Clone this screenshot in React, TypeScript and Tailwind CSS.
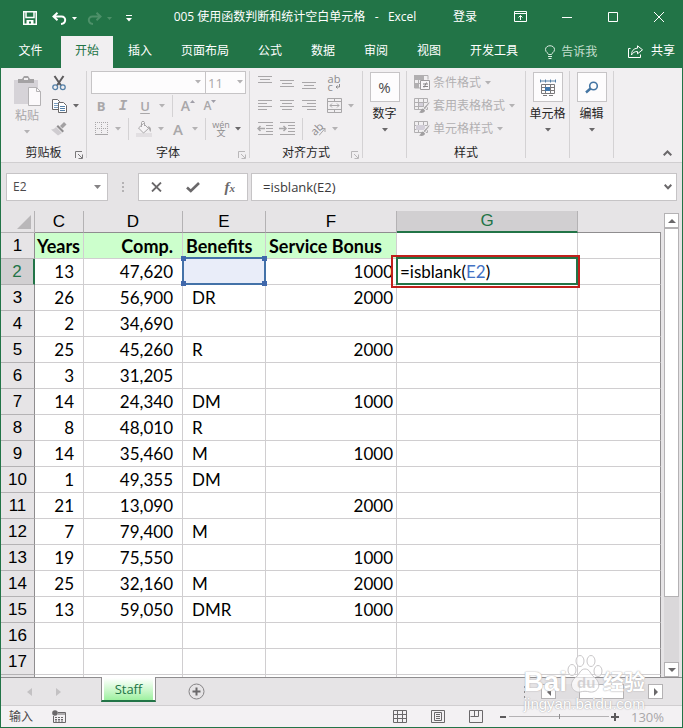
import React, { ReactNode } from "react";

const UI = "font-['Open_Sans','Noto_Sans_CJK_SC',sans-serif]";

function Caret({ dark = false }: { dark?: boolean }) {
  return (
    <svg width="6" height="4" viewBox="0 0 6 4" className={dark ? "text-[#6a686a]" : "text-[#b4b2b4]"} aria-hidden="true">
      <path d="M0 0h6L3 3.5z" fill="currentColor" />
    </svg>
  );
}

function Tool({ label, children }: { label: string; children: ReactNode }) {
  return (
    <button aria-label={label} className="flex h-[23px] w-[22px] shrink-0 items-center justify-center text-[#a9a7a9]">
      {children}
    </button>
  );
}

function Drop({ label, dark }: { label: string; dark?: boolean }) {
  return (
    <button aria-label={label} className="flex h-[23px] w-3 shrink-0 items-center justify-center">
      <Caret dark={dark} />
    </button>
  );
}

function MiniSep() {
  return <span className="mx-1 h-[22px] w-px shrink-0 bg-[#d4d2d4]" />;
}

function Launcher({ dark = false }: { dark?: boolean }) {
  return (
    <svg width="8" height="8" viewBox="0 0 8 8" className={dark ? "text-[#7a787a]" : "text-[#b9b7b9]"} fill="none" stroke="currentColor" aria-hidden="true">
      <path d="M.5 7V.5H7M3 3l4 4M7.5 3.5v4h-4" />
    </svg>
  );
}

function Group({ label, width, launcher, children }: { label?: string; width: string; launcher?: "dark" | "light"; children: ReactNode }) {
  return (
    <section className={`flex shrink-0 ${width}`}>
      <div className="flex min-w-0 flex-1 flex-col">
        <div className="h-[69px]">{children}</div>
        {label && (
          <div className="grid h-[22px] grid-cols-[14px_1fr_14px] items-center pt-[3px] text-[#262626]">
            <span />
            <span className="text-center">{label}</span>
            {launcher && (
              <button aria-label={`${label}设置`} className="flex items-center justify-center pt-1">
                <Launcher dark={launcher === "dark"} />
              </button>
            )}
          </div>
        )}
      </div>
      <span className="h-[87px] w-px bg-[#d4d2d4]" />
    </section>
  );
}

function Lines({ rows }: { rows: [number, number, number][] }) {
  return (
    <svg width="15" height="13" viewBox="0 0 15 13" stroke="currentColor" aria-hidden="true">
      {rows.map(([x1, x2, y]) => (
        <path key={y} d={`M${x1} ${y + 0.5}H${x2}`} />
      ))}
    </svg>
  );
}

function Indent({ right = false }: { right?: boolean }) {
  return (
    <svg width="17" height="13" viewBox="0 0 17 13" stroke="currentColor" fill="none" aria-hidden="true">
      <path d="M1 .5h15M9 3.5h7M9 6.5h7M9 9.5h7M1 12.5h15" />
      <path d={right ? "M0 6.5h7M4.500 4l2.500 2.500-2.500 2.500" : "M1 6.500h7M3.500 4L1 6.500 3.500 9"} strokeWidth="1.500" />
    </svg>
  );
}

function BigTool({ label, children }: { label: string; children: ReactNode }) {
  return (
    <button className="flex w-full flex-col items-center pt-px text-[#262626]">
      <span className="flex size-[30px] items-center justify-center border border-[#c6c4c6] bg-[#fdfcfd]">{children}</span>
      <span className="mt-[3px] whitespace-nowrap leading-[17px]">{label}</span>
      <span className="mt-1 flex h-2 items-center">
        <Caret dark />
      </span>
    </button>
  );
}

function StyleIcon({ kind }: { kind: "cond" | "table" | "cell" }) {
  return (
    <svg width="17" height="17" viewBox="0 0 17 17" fill="none" stroke="#b1afb1" aria-hidden="true">
      {kind === "cond" ? (
        <>
          <path d="M1 1.500h13v4M.5 1v13H6M4.500 1v12M9.500 1v5M1 5.500h8M1 9.500h5" />
          <path d="M1 1h8v4H1zM1 9h4v5H1z" fill="#b1afb1" stroke="none" />
          <path d="M6.500 6.500h9v9h-9z" fill="#f8f6f8" stroke="#9b999b" />
          <path d="M9 10h5M9 12.500h5M12.500 8.500l-2.500 5" stroke="#858385" />
        </>
      ) : (
        <>
          <path d="M.5 1.500h13v11H.5zM4.500 1.500v11M9.500 1.500v11M.5 5.500h13M.5 9.500h13" />
          <path d={kind === "table" ? "M5 6h4v3H5z" : "M2 5h9v5H2z"} fill="#d3cfd9" stroke="none" />
          <path d="M15.500 4L9 11l2 2 5-7z" fill="#b1afb1" stroke="#f1eff1" />
          <path d="M9 11.500c-2 0-2 3-4 4 3 1 6 0 6-2z" fill="#a19fa1" stroke="none" />
        </>
      )}
    </svg>
  );
}

const TABS = ["文件", "开始", "插入", "页面布局", "公式", "数据", "审阅", "视图", "开发工具"];

function TitleBar() {
  return (
    <header className="flex h-9 items-center bg-[#227447] text-white">
      <div className="flex w-[160px] shrink-0 items-center pl-[22px]">
        <button aria-label="保存">
          <svg width="14" height="14" viewBox="0 0 14 14" fill="none" stroke="#fff" strokeWidth="1.500" aria-hidden="true">
            <path d="M.75.75h12.500v12.500H.75z" />
            <path d="M3 1v5.500h8V1" />
            <path d="M3.500 9h7v4h-2.500v-2.500H6V13H3.500z" fill="#fff" stroke="none" />
          </svg>
        </button>
        <button aria-label="撤消" className="ml-[15px] flex items-center gap-[5px]">
          <svg width="15" height="13" viewBox="0 0 15 13" fill="none" stroke="#fff" strokeWidth="2" aria-hidden="true">
            <path d="M5.500.8L1.500 4.500l4 3.700M2 4.500h7.500c5 0 5 7-.5 7.500" />
          </svg>
          <svg width="5" height="3" viewBox="0 0 5 3" aria-hidden="true"><path d="M0 0h5L2.500 3z" fill="#fff" /></svg>
        </button>
        <button aria-label="恢复" className="ml-2.5 flex items-center gap-[5px]">
          <svg width="15" height="13" viewBox="0 0 15 13" fill="none" stroke="#4d9069" strokeWidth="2" aria-hidden="true">
            <path d="M9.500.8l4 3.700-4 3.700M13 4.500H5.500c-5 0-5 7 .5 7.500" />
          </svg>
          <svg width="5" height="3" viewBox="0 0 5 3" aria-hidden="true"><path d="M0 0h5L2.500 3z" fill="#4d9069" /></svg>
        </button>
        <button aria-label="自定义快速访问工具栏" className="ml-3.5">
          <svg width="6" height="7" viewBox="0 0 6 7" aria-hidden="true"><path d="M0 0h6v1H0zM0 3h6L3 6.500z" fill="#fff" /></svg>
        </button>
      </div>
      <h1 className="flex-1 whitespace-pre pb-[3px] pr-6 text-center">005 使用函数判断和统计空白单元格   -   Excel</h1>
      <div className="flex shrink-0 items-center pb-[3px] pr-[18px]">
        <button className="mr-[37px]">登录</button>
        <button aria-label="功能区显示选项" className="mr-[35px]">
          <svg width="13" height="11" viewBox="0 0 13 11" fill="none" stroke="#fff" aria-hidden="true">
            <path d="M.5.5h12v10H.5zM.5 2.500h12M6.500 9V4.500M4.500 6.500l2-2 2 2" />
          </svg>
        </button>
        <button aria-label="最小化" className="mr-[36px]">
          <svg width="10" height="10" viewBox="0 0 10 10" stroke="#fff" aria-hidden="true"><path d="M0 5.500h10" /></svg>
        </button>
        <button aria-label="最大化" className="mr-[36px]">
          <svg width="10" height="10" viewBox="0 0 10 10" fill="none" stroke="#fff" aria-hidden="true"><path d="M.5.5h9v9h-9z" /></svg>
        </button>
        <button aria-label="关闭">
          <svg width="10" height="10" viewBox="0 0 10 10" stroke="#fff" aria-hidden="true"><path d="M0 0l10 10M10 0L0 10" /></svg>
        </button>
      </div>
    </header>
  );
}

function TabBar() {
  return (
    <nav className="flex h-8 items-stretch gap-px bg-[#227447] text-white">
      {TABS.map((tab) => (
        <button
          key={tab}
          className={
            tab === "开始"
              ? "whitespace-nowrap bg-[#f1eff1] px-3.5 pb-0.5 text-[#227447]"
              : tab === "文件"
                ? "w-[59px] whitespace-nowrap pb-0.5"
                : "whitespace-nowrap px-3.5 pb-0.5"
          }
        >
          {tab}
        </button>
      ))}
      <button className="ml-3 flex items-center gap-1.5 whitespace-nowrap text-[#c4dfce]">
        <svg width="10" height="14" viewBox="0 0 10 14" fill="none" stroke="#dcece2" aria-hidden="true">
          <path d="M3.500 9.500C3.500 8 .5 7.500.5 4.500c0-5 9-5 9 0 0 3-3 3.500-3 5zM3 11.500h4M3.500 13.500h3" />
        </svg>
        告诉我
      </button>
      <button className="ml-auto flex items-center gap-2 whitespace-nowrap pb-0.5 pr-[7px]">
        <svg width="15" height="13" viewBox="0 0 15 13" fill="none" stroke="#fff" aria-hidden="true">
          <path d="M2.500 3.500h-2v9h12v-3M9.500.8l5 4-5 4V6.500c-3 0-4.500 1-6 3.500 0-4 2-6.500 6-6.800z" />
        </svg>
        共享
      </button>
    </nav>
  );
}

function Ribbon() {
  return (
    <div className="flex h-[95px] border-b border-[#d0ced0] bg-[#f1eff1] pt-[3px]">
      <Group label="剪贴板" width="w-[86px]" launcher="dark">
        <div className="flex pl-[11px] text-[#a9a7a9]">
          <button className="flex w-[30px] flex-col items-center pt-1">
            <svg width="30" height="32" viewBox="0 0 30 32" aria-hidden="true">
              <path d="M2 5h24v24H2z" fill="#d6d3d8" />
              <path d="M6 8V4h4l2-3h4l2 3h4v4z" fill="#a4a2a4" />
              <path d="M12 3h4v2h-4z" fill="#f1eff1" />
              <path d="M16.500 12.500h8l4 4v14h-12z" fill="#fbf9fb" stroke="#b4b2b4" />
              <path d="M24.500 12.500v4h4" fill="none" stroke="#b4b2b4" />
            </svg>
            <span className="whitespace-nowrap leading-[17px]">粘贴</span>
            <span className="mt-1 flex h-2 items-center"><Caret /></span>
          </button>
          <div className="ml-1.5 flex flex-col">
            <Tool label="剪切">
              <svg width="14" height="16" viewBox="0 0 14 16" fill="none" aria-hidden="true">
                <path d="M2.500 1l6.500 9.500M11.500 1L5 10.500" stroke="#5c5a5c" strokeWidth="2" />
                <circle cx="3.200" cy="12.200" r="2.400" stroke="#5580a8" strokeWidth="1.300" />
                <circle cx="10.800" cy="12.200" r="2.400" stroke="#5580a8" strokeWidth="1.300" />
              </svg>
            </Tool>
            <div className="flex">
              <Tool label="复制">
                <svg width="15" height="14" viewBox="0 0 15 14" fill="#fff" stroke="#6a686a" aria-hidden="true">
                  <path d="M.5.5h5l2 2v8h-7z" />
                  <path d="M2 4.500h4M2 6.500h4M2 8.500h4" stroke="#7d9fc0" />
                  <path d="M6.500 3.500h5l3 3v7h-8z" />
                  <path d="M8 7.500h5M8 9.500h5M8 11.500h5" stroke="#5580a8" />
                </svg>
              </Tool>
              <Drop label="复制选项" dark />
            </div>
            <Tool label="格式刷">
              <svg width="16" height="14" viewBox="0 0 16 14" aria-hidden="true">
                <path d="M13 0l2.500 2.500-4 4L9 4z" fill="#a3a1a3" />
                <path d="M7 3l6 6-1.500 1.500-6-6z" fill="#8f8d8f" />
                <path d="M5 5l6 6-4 2.500L0 7.500c2 0 4-1 5-2.500z" fill="#cfccd0" />
              </svg>
            </Tool>
          </div>
        </div>
      </Group>

      <Group label="字体" width="w-[163px]" launcher="light">
        <div className="flex h-[23px] pl-1">
          <label className="relative h-[23px] w-[115px] border border-[#c6c4c6] bg-[#fdfcfd]">
            <select aria-label="字体" className="h-full w-full appearance-none bg-transparent px-1" defaultValue="">
              <option value=""></option>
              <option>Calibri</option>
            </select>
            <span className="pointer-events-none absolute right-1 top-2"><Caret /></span>
          </label>
          <label className="relative -ml-px h-[23px] w-[41px] border border-[#c6c4c6] bg-[#fdfcfd]">
            <select aria-label="字号" className="block h-full w-full appearance-none bg-transparent px-0.5 text-[13px] text-[#a9a7a9]" defaultValue="11">
              <option>11</option>
              <option>12</option>
            </select>
            <span className="pointer-events-none absolute right-0.5 top-2"><Caret /></span>
          </label>
        </div>
        <div className="flex items-center pl-[3px]">
          <Tool label="加粗"><b className="text-[13px]">B</b></Tool>
          <Tool label="倾斜"><i className="font-['Liberation_Mono',monospace] text-[14px] font-bold">I</i></Tool>
          <Tool label="下划线"><span className="text-[13px] font-semibold underline underline-offset-2">U</span></Tool>
          <Drop label="下划线选项" />
          <MiniSep />
          <Tool label="增大字号">
            <span className="text-[14px] font-semibold">A</span>
            <svg width="5" height="12" viewBox="0 0 5 12" aria-hidden="true"><path d="M0 3h5L2.500 0z" fill="#a09ea8" /></svg>
          </Tool>
          <Tool label="减小字号">
            <span className="text-[12px] font-semibold">A</span>
            <svg width="5" height="12" viewBox="0 0 5 12" aria-hidden="true"><path d="M0 0h5L2.500 3z" fill="#a09ea8" /></svg>
          </Tool>
        </div>
        <div className="flex items-center pl-[3px]">
          <Tool label="边框">
            <svg width="13" height="13" viewBox="0 0 13 13" fill="none" stroke="currentColor" aria-hidden="true">
              <path d="M0 .5h13M0 6.500h13M.5 0v13M6.500 0v13M12.500 0v13" strokeDasharray="1 1" />
              <path d="M0 12.500h13" />
            </svg>
          </Tool>
          <Drop label="边框选项" />
          <MiniSep />
          <Tool label="填充颜色">
            <svg width="16" height="16" viewBox="0 0 16 16" fill="none" stroke="#a9a7a9" aria-hidden="true">
              <path d="M0 12h16v4H0z" fill="#e2dfe2" stroke="none" />
              <path d="M7.500 2.500l5 5-5 4.500-5-5zM5.500 6V1.500c0-1.500 3-1.500 3 0V5" fill="#f6f4f6" />
              <path d="M12 5c3 1 3.500 3 2.500 6-1-1-1-2.500-2-3.500z" fill="#a9a7a9" stroke="none" />
            </svg>
          </Tool>
          <Drop label="填充颜色选项" />
          <Tool label="字体颜色"><span className="text-[15px] font-semibold">A</span></Tool>
          <Drop label="字体颜色选项" />
          <MiniSep />
          <Tool label="拼音">
            <span className="flex flex-col items-center text-[9px] leading-[8px] text-[#8d8b8d]">
              <span>wén</span>
              <span>文</span>
            </span>
          </Tool>
          <Drop label="拼音选项" dark />
        </div>
      </Group>

      <Group label="对齐方式" width="w-[113px]" launcher="light">
        <div className="flex pl-1">
          <Tool label="顶端对齐"><Lines rows={[[0, 14, 0], [2, 12, 3], [0, 14, 6]]} /></Tool>
          <Tool label="垂直居中"><Lines rows={[[0, 14, 4], [2, 12, 7], [0, 14, 10]]} /></Tool>
          <Tool label="底端对齐"><Lines rows={[[0, 14, 6], [2, 12, 9], [0, 14, 12]]} /></Tool>
          <span className="w-[3px]" />
          <Tool label="自动换行">
            <span className="flex flex-col text-[11px] leading-[8px] text-[#8d8b8d]">
              <span>ab</span>
              <span className="flex items-center gap-0.5">
                c
                <svg width="5" height="5" viewBox="0 0 5 5" fill="none" stroke="currentColor" aria-hidden="true"><path d="M4.500 0v3H1M2.500 1.500L1 3l1.500 1.500" /></svg>
              </span>
            </span>
          </Tool>
        </div>
        <div className="flex pl-1">
          <Tool label="左对齐"><Lines rows={[[0, 14, 1], [0, 9, 4], [0, 14, 7], [0, 9, 10]]} /></Tool>
          <Tool label="居中"><Lines rows={[[0, 14, 1], [2, 12, 4], [0, 14, 7], [2, 12, 10]]} /></Tool>
          <Tool label="右对齐"><Lines rows={[[0, 14, 1], [5, 14, 4], [0, 14, 7], [5, 14, 10]]} /></Tool>
          <span className="w-[3px]" />
          <Tool label="合并后居中">
            <svg width="15" height="15" viewBox="0 0 15 15" fill="none" stroke="currentColor" aria-hidden="true">
              <path d="M.5.5h14v14H.5zM.5 3.500h14M.5 11.500h14M7.500.5v3M7.500 11.500v3M3 7.500h9M5 5.500l-2 2 2 2M10 5.500l2 2-2 2" />
            </svg>
          </Tool>
          <Drop label="合并选项" />
        </div>
        <div className="flex items-center pl-1">
          <Tool label="减少缩进量"><Indent /></Tool>
          <Tool label="增加缩进量"><Indent right /></Tool>
          <MiniSep />
          <Tool label="方向">
            <span className="-rotate-45 text-[11px] leading-none text-[#8d8b8d]">ab</span>
            <svg width="7" height="9" viewBox="0 0 7 9" fill="none" stroke="currentColor" className="-ml-1 mt-1.5 shrink-0" aria-hidden="true"><path d="M0 8.500l6-7M2.500 1.500H6V5" /></svg>
          </Tool>
          <Drop label="方向选项" />
        </div>
      </Group>

      <Group width="w-[44px]">
        <BigTool label="数字"><span className="text-[15px] text-[#4b494b]">%</span></BigTool>
      </Group>

      <Group label="样式" width="w-[119px]">
        {(
          [
            ["cond", "条件格式"],
            ["table", "套用表格格式"],
            ["cell", "单元格样式"],
          ] as const
        ).map(([kind, label]) => (
          <button key={kind} className="flex h-[23px] items-center gap-0.5 whitespace-nowrap pl-[7px] text-[#b1afb1]">
            <StyleIcon kind={kind} />
            {label}
            <span className="ml-0.5"><Caret /></span>
          </button>
        ))}
      </Group>

      <Group width="w-[44px]">
        <BigTool label="单元格">
          <svg width="16" height="17" viewBox="0 0 16 17" fill="none" stroke="#7a787a" aria-hidden="true">
            <path d="M1 2h14M.5.5v3M15.500.5v3M5.500.5v3M10.500.5v3" stroke="#5580a8" />
            <path d="M1.500 5.500h13v9h-13zM1.500 8.500h13M1.500 11.500h13M5.500 5.500v9M10.500 5.500v9M3 16.500h4M9 16.500h4" />
            <path d="M5 8h5v4H5z" fill="#3f76ab" stroke="none" />
          </svg>
        </BigTool>
      </Group>

      <Group width="w-[44px]">
        <BigTool label="编辑">
          <svg width="14" height="13" viewBox="0 0 14 13" fill="none" stroke="#4475a3" aria-hidden="true">
            <circle cx="8.500" cy="5" r="3.800" strokeWidth="1.600" />
            <path d="M5.500 7.500L1 11.500" strokeWidth="2.400" />
          </svg>
        </BigTool>
      </Group>

      <button aria-label="折叠功能区" className="ml-auto mt-[79px] flex h-3 w-[30px] justify-center">
        <svg width="9" height="6" viewBox="0 0 9 6" fill="none" stroke="#6a686a" strokeWidth="2" aria-hidden="true"><path d="M.7 5.300L4.500 1.500l3.800 3.800" /></svg>
      </button>
    </div>
  );
}

function FormulaBar() {
  return (
    <div className="flex h-12 items-center bg-[#e6e4e6] pl-[5px] pr-[5px]">
      <label className="flex h-7 w-[102px] shrink-0 items-center border border-[#c6c4c6] bg-white pr-1.5">
        <input aria-label="名称框" defaultValue="E2" className="min-w-0 flex-1 bg-transparent pl-1.5 text-[12px] text-[#4b494b] outline-none" />
        <svg width="7" height="4" viewBox="0 0 7 4" aria-hidden="true"><path d="M0 0h7L3.500 4z" fill="#858385" /></svg>
      </label>
      <svg width="30" height="12" viewBox="0 0 30 12" className="shrink-0" aria-hidden="true">
        <path d="M14 1h2v2h-2zM14 5h2v2h-2zM14 9h2v2h-2z" fill="#b4b2b4" />
      </svg>
      <div className="flex h-7 w-[110px] shrink-0 items-center justify-around border border-[#c6c4c6] bg-white text-[#6a686a]">
        <button aria-label="取消">
          <svg width="11" height="10" viewBox="0 0 11 10" stroke="currentColor" strokeWidth="1.800" aria-hidden="true"><path d="M1 .5l9 9M10 .5l-9 9" /></svg>
        </button>
        <button aria-label="输入">
          <svg width="14" height="11" viewBox="0 0 14 11" fill="none" stroke="currentColor" strokeWidth="2.600" aria-hidden="true"><path d="M1 5.500L4.800 9 13 1" /></svg>
        </button>
        <button aria-label="插入函数" className="font-['Liberation_Serif',serif] text-[15px] font-bold italic leading-none">
          f<span className="text-[11px]">x</span>
        </button>
      </div>
      <label className="ml-[3px] flex h-7 min-w-0 flex-1 items-center border border-[#c6c4c6] bg-white pr-1">
        <input aria-label="编辑栏" defaultValue="=isblank(E2)" className="min-w-0 flex-1 bg-transparent pl-[11px] text-[13px] text-[#3b393b] outline-none" />
        <svg width="8" height="6" viewBox="0 0 8 6" fill="none" stroke="#6a686a" strokeWidth="2" aria-hidden="true"><path d="M.7.8L4 4.200 7.300.8" /></svg>
      </label>
    </div>
  );
}

const ROWS: [string, string, string, string][] = [
  ["13", "47,620", "", "1000"],
  ["26", "56,900", "DR", "2000"],
  ["2", "34,690", "", ""],
  ["25", "45,260", "R", "2000"],
  ["3", "31,205", "", ""],
  ["14", "24,340", "DM", "1000"],
  ["8", "48,010", "R", ""],
  ["14", "35,460", "M", "1000"],
  ["1", "49,355", "DM", ""],
  ["21", "13,090", "", "2000"],
  ["7", "79,400", "M", ""],
  ["19", "75,550", "", "1000"],
  ["25", "32,160", "M", "2000"],
  ["13", "59,050", "DMR", "1000"],
  ["", "", "", ""],
  ["", "", "", ""],
  ["", "", "", ""],
];

const CELL = "border-b border-r border-[#d0ced0] p-0";
const ROW_HEAD = "border-b border-r border-b-[#b4b2b4] border-r-[#8f8d8f] bg-[#e6e4e6] p-0 font-['Liberation_Sans',Arial,sans-serif] text-[17px] font-normal";

function Sheet() {
  return (
    <div className="min-w-0 flex-1 overflow-hidden">
      <table className="w-full table-fixed border-separate border-spacing-0 whitespace-nowrap bg-white font-['Lato',sans-serif] text-[17px] leading-5 text-black">
        <colgroup>
          <col className="w-[34px]" />
          <col className="w-[49px]" />
          <col className="w-[99px]" />
          <col className="w-[83px]" />
          <col className="w-[131px]" />
          <col className="w-[181px]" />
          <col />
        </colgroup>
        <thead className="font-['Liberation_Sans',Arial,sans-serif]">
          <tr className="h-[22px] bg-[#e6e4e6]">
            <th aria-label="全选" className="border-b border-r border-[#b4b2b4] p-0">
              <svg width="14" height="14" viewBox="0 0 14 14" className="ml-auto mr-[3px]" aria-hidden="true"><path d="M14 0v14H0z" fill="#b9b7b9" /></svg>
            </th>
            {["C", "D", "E", "F"].map((c) => (
              <th key={c} scope="col" className="border-b border-r border-b-[#8f8d8f] border-r-[#b4b2b4] p-0 font-normal">{c}</th>
            ))}
            <th scope="col" className="border-b-2 border-r border-b-[#227447] border-r-[#b4b2b4] bg-[#d1cfd1] p-0 font-normal text-[#227447]">G</th>
            <th scope="col" aria-label="H" className="border-b border-[#8f8d8f] p-0" />
          </tr>
        </thead>
        <tbody>
          <tr className="h-[26px] text-[18px] font-bold">
            <th scope="row" className={ROW_HEAD}>1</th>
            <td className={`${CELL} bg-[#ccffcc] pr-[3px] text-right`}>Years</td>
            <td className={`${CELL} bg-[#ccffcc] pr-[9px] text-right`}>Comp.</td>
            <td className={`${CELL} bg-[#ccffcc] pl-[3px]`}>Benefits</td>
            <td className={`${CELL} bg-[#ccffcc] pl-[3px]`}>Service Bonus</td>
            <td className={CELL} />
            <td className={`${CELL} border-r-[#8f8d8f]`} />
          </tr>
          {ROWS.map(([years, comp, benefits, bonus], i) => {
            const active = i === 0;
            return (
              <tr key={i} className="h-[26px]">
                <th
                  scope="row"
                  className={
                    active
                      ? "border-b border-r-2 border-b-[#b4b2b4] border-r-[#227447] bg-[#d1cfd1] p-0 font-['Liberation_Sans',Arial,sans-serif] font-normal text-[#227447]"
                      : ROW_HEAD
                  }
                >
                  {i < 16 ? i + 2 : ""}
                </th>
                <td className={`${CELL} pr-[9px] text-right`}>{years}</td>
                <td className={`${CELL} pr-[9px] text-right`}>{comp}</td>
                <td className={`${CELL} relative pl-[9px]`}>
                  {active && (
                    <span className="absolute -inset-x-px -bottom-px -top-0.5 z-10 border-2 border-[#4472a8] bg-[#e9edf9]">
                      <i className="absolute -left-[3px] -top-[3px] size-[5px] bg-[#4068ac]" />
                      <i className="absolute -right-[3px] -top-[3px] size-[5px] bg-[#4068ac]" />
                      <i className="absolute -bottom-[3px] -left-[3px] size-[5px] bg-[#4068ac]" />
                      <i className="absolute -bottom-[3px] -right-[3px] size-[5px] bg-[#4068ac]" />
                    </span>
                  )}
                  {benefits}
                </td>
                <td className={`${CELL} pr-[3px] text-right`}>{bonus}</td>
                <td className={`${CELL} relative pl-[3px]`}>
                  {active && (
                    <>
                      <span className="absolute -bottom-1 -left-1.5 -right-[3px] -top-1 z-10 border-2 border-[#c0201c]" />
                      <span className="absolute -left-px -right-px -top-0.5 bottom-[-1px] border-2 border-[#227447]" />
                      =isblank(<span className="text-[#4472c4]">E2</span>)
                    </>
                  )}
                </td>
                <td className={`${CELL} border-r-[#8f8d8f]`} />
              </tr>
            );
          })}
        </tbody>
      </table>
    </div>
  );
}

function ScrollButton({ label, d }: { label: string; d: string }) {
  return (
    <button aria-label={label} className="flex size-[15px] shrink-0 items-center justify-center border border-[#b4b2b4] bg-white">
      <svg width="8" height="8" viewBox="0 0 8 8" aria-hidden="true"><path d={d} fill="#6a686a" /></svg>
    </button>
  );
}

function VerticalScroll() {
  return (
    <div className="flex w-[21px] shrink-0 flex-col items-center bg-[#e6e4e6] pt-0.5">
      <ScrollButton label="向上滚动" d="M0 6h8L4 2z" />
      <div className="flex w-[15px] flex-1 flex-col bg-[#dad8da]">
        <div className="h-[369px] border border-[#b4b2b4] bg-white" />
      </div>
      <ScrollButton label="向下滚动" d="M0 2h8L4 6z" />
    </div>
  );
}

function SheetTabs() {
  return (
    <div className="flex h-7 border-t border-[#8f8d8f] bg-[#e6e4e6]">
      <button aria-label="上一个工作表" className="ml-[26px] flex w-[7px] items-center">
        <svg width="5" height="8" viewBox="0 0 5 8" aria-hidden="true"><path d="M5 0v8L0 4z" fill="#c3c1c3" /></svg>
      </button>
      <button aria-label="下一个工作表" className="ml-[22px] flex w-[7px] items-center">
        <svg width="5" height="8" viewBox="0 0 5 8" aria-hidden="true"><path d="M0 0v8l5-4z" fill="#c3c1c3" /></svg>
      </button>
      <button className="-mt-px ml-[38px] h-[25px] w-[55px] border-x border-b-2 border-x-[#8f8d8f] border-b-[#227447] bg-white px-0.5 text-[13px] text-[#227447]">
        <span className="block h-[22px] bg-linear-to-b from-white to-[#9df0a0] leading-[22px]">Staff</span>
      </button>
      <button aria-label="新工作表" className="ml-8 flex items-center">
        <svg width="17" height="17" viewBox="0 0 17 17" fill="none" stroke="#858385" aria-hidden="true">
          <circle cx="8.500" cy="8.500" r="7.500" />
          <path d="M8.500 4.500v8M4.500 8.500h8" stroke="#6a686a" strokeWidth="2" />
        </svg>
      </button>
      <div className="ml-auto flex items-center pr-[19px]">
        <svg width="17" height="14" viewBox="0 0 17 14" aria-hidden="true"><path d="M0 1h1v2H0zM0 6h1v2H0zM0 11h1v2H0z" fill="#8f8d8f" /></svg>
        <ScrollButton label="向左滚动" d="M6 0v8L2 4z" />
        <div className="flex h-[15px] w-[92px] bg-[#e0dee0] pl-[23px]">
          <div className="w-[45px] border border-[#b4b2b4] bg-white" />
        </div>
        <ScrollButton label="向右滚动" d="M2 0v8l4-4z" />
      </div>
    </div>
  );
}

function StatusBar() {
  return (
    <footer className="flex h-[22px] items-center border-t border-[#d0ced0] bg-[#f3f1f3] pl-2 pr-[19px] text-[#4b494b]">
      <span>输入</span>
      <button aria-label="录制宏" className="ml-[19px]">
        <svg width="14" height="13" viewBox="0 0 14 13" fill="none" stroke="#6a686a" aria-hidden="true">
          <path d="M6 2.500h7.500v10h-12V6M6 4h7" />
          <path d="M3 7.500h9M3 9.500h9M3 11h9" strokeDasharray="2 1" />
          <circle cx="3" cy="3" r="2.800" fill="#6a686a" stroke="none" />
        </svg>
      </button>
      <div className="ml-auto flex items-center gap-6">
        <button aria-label="普通">
          <svg width="14" height="13" viewBox="0 0 14 13" fill="none" stroke="#6a686a" aria-hidden="true"><path d="M.5.5h13v12H.5zM.5 4.500h13M.5 8.500h13M4.500.5v12M9.500.5v12" /></svg>
        </button>
        <button aria-label="页面布局视图">
          <svg width="14" height="13" viewBox="0 0 14 13" fill="none" stroke="#6a686a" aria-hidden="true"><path d="M.5.5h13v12H.5zM3.500 2.500h7v8h-7zM5 4.500h4M5 6.500h4M5 8.500h4" /></svg>
        </button>
        <button aria-label="分页预览">
          <svg width="14" height="13" viewBox="0 0 14 13" fill="none" stroke="#6a686a" aria-hidden="true"><path d="M.5.5h13v12H.5zM5.500.5v6M9.500.5v6h-8" /></svg>
        </button>
      </div>
      <button aria-label="缩小" className="ml-4 flex w-2 justify-center">
        <svg width="6" height="2" viewBox="0 0 6 2" aria-hidden="true"><path d="M0 0h6v2H0z" fill="#5c5a5c" /></svg>
      </button>
      <input
        type="range"
        aria-label="显示比例"
        min="0"
        max="100"
        defaultValue="50"
        className="mx-0.5 h-px w-[100px] appearance-none bg-[#b4b2b4] [&::-webkit-slider-thumb]:h-[5px] [&::-webkit-slider-thumb]:w-px [&::-webkit-slider-thumb]:appearance-none [&::-webkit-slider-thumb]:bg-[#8f8d8f]"
      />
      <button aria-label="放大" className="flex w-2 justify-center">
        <svg width="8" height="8" viewBox="0 0 8 8" aria-hidden="true"><path d="M3 0h2v3h3v2H5v3H3V5H0V3h3z" fill="#5c5a5c" /></svg>
      </button>
      <span className="ml-3 w-8 text-right text-[13px] leading-4 text-[#a9a7a9]">130%</span>
    </footer>
  );
}

function Watermark() {
  const edge = "[text-shadow:0_0_1px_#a9a7a9,0_0_2px_#c3c1c3]";
  return (
    <div className="pointer-events-none absolute bottom-[17px] right-[37px] z-20 flex flex-col items-center text-white">
      <div className="flex items-end font-['Liberation_Sans','Noto_Sans_CJK_SC',sans-serif] font-bold">
        <span className={`text-[28px] leading-6 ${edge}`}>Bai</span>
        <svg width="36" height="40" viewBox="0 0 36 40" fill="#fff" fillOpacity=".7" stroke="#c9c7c9" aria-hidden="true">
          <ellipse cx="5" cy="16" rx="4" ry="5.500" />
          <ellipse cx="13" cy="7" rx="4" ry="5.500" />
          <ellipse cx="24" cy="7" rx="4" ry="5.500" />
          <ellipse cx="31" cy="17" rx="4" ry="5.500" />
          <path d="M18 15c-5 0-5 5-9 8-9 7-3 16 4 15 4-1 6-1 10 0 8 1 13-8 4-15-4-3-4-8-9-8z" />
          <text x="10" y="34" fontSize="15" fill="#c3c1c3" stroke="none">du</text>
        </svg>
        <span className={`text-[21px] leading-6 ${edge}`}>经验</span>
      </div>
      <span className={`mt-1 font-['Liberation_Sans',sans-serif] text-[15px] leading-3 ${edge}`}>jingyan.baidu.com</span>
    </div>
  );
}

export default function App() {
  return (
    <div className={`relative flex h-screen flex-col overflow-hidden border-x border-b border-[#227447] bg-[#e6e4e6] text-[12px] leading-4 ${UI}`}>
      <TitleBar />
      <TabBar />
      <Ribbon />
      <FormulaBar />
      <main className="flex min-h-0 flex-1">
        <Sheet />
        <VerticalScroll />
      </main>
      <SheetTabs />
      <StatusBar />
      <Watermark />
    </div>
  );
}
